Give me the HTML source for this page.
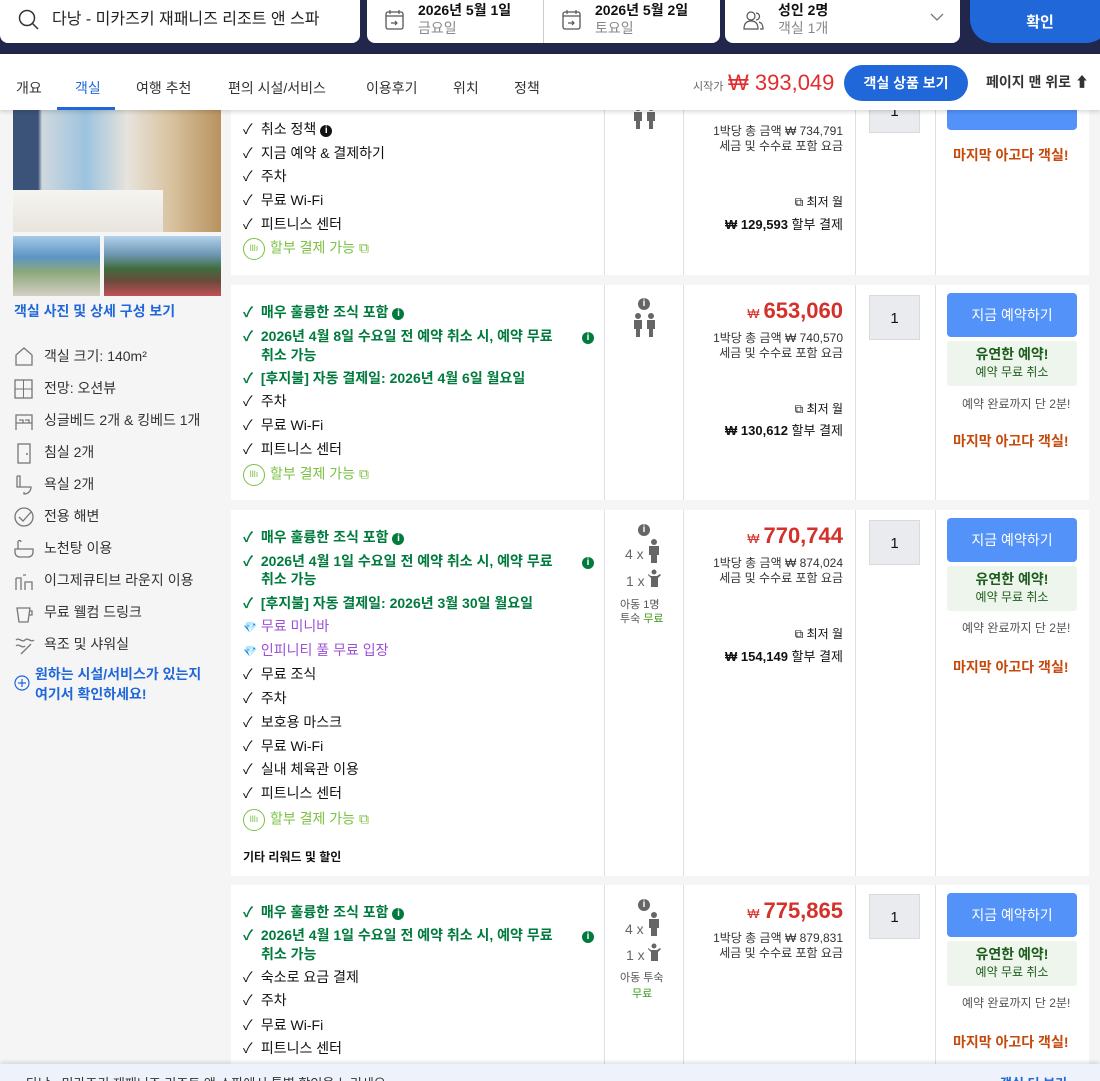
<!DOCTYPE html>
<html><head><meta charset="utf-8"><style>
*{margin:0;padding:0;box-sizing:border-box}
body{width:1100px;height:1081px;overflow:hidden;background:#f5f5f5;font-family:"Liberation Sans","Noto Sans CJK KR",sans-serif;font-size:14px;color:#111;position:relative}
.a{position:absolute;white-space:nowrap;line-height:18px}
.card{position:absolute;left:231px;width:858px;background:#fff}
.vl{position:absolute;top:0;bottom:0;width:1px;background:#e0e0e0}
.g{color:#007a3d;font-weight:bold}
.p{color:#9b4fd6}
.inst{color:#7ac142}
.ck{display:inline-block;width:14px}
.r{text-align:right}
.price{color:#d4312b;font-size:22px;font-weight:bold;line-height:26px}
.price small{font-size:13px;font-weight:normal;margin-right:4px}
.sm{font-size:12px;line-height:15px;color:#333}
.qty{position:absolute;width:51px;height:45px;background:#e9ebee;border:1px solid #d8dadd;text-align:center;line-height:45px;font-size:15px}
.btn{position:absolute;width:130px;height:44px;background:#5392f9;color:#fff;border-radius:4px;text-align:center;line-height:44px;font-size:14px}
.gb{position:absolute;width:130px;height:45px;background:#eef5ec;border-radius:3px;text-align:center;color:#1d5d1d;font-size:14px;font-weight:bold;line-height:20px;padding-top:3px}
.gb div{font-weight:normal;font-size:12px;line-height:17px}
.last{color:#c4490b;font-weight:bold;font-size:14px}
.info{display:inline-block;width:12px;height:12px;border-radius:50%;background:#007a3d;color:#fff;font-size:10px;line-height:12px;text-align:center;font-weight:bold;vertical-align:1px;margin-left:4px}
.ib{background:#111}
.ig{background:#666}
.circ{display:inline-block;width:22px;height:22px;border:1.5px solid #7ac142;border-radius:50%;vertical-align:middle;margin-right:5px;font-size:9px;text-align:center;line-height:19px;color:#7ac142}
.lft{left:44px;color:#333}
</style></head><body>

<!-- header -->
<div style="position:absolute;left:0;top:0;width:1100px;height:54px;background:#20274a"></div>
<div style="position:absolute;left:0;top:-6px;width:360px;height:49px;background:#fff;border-radius:0 0 8px 8px"></div>
<svg class="a" style="left:17px;top:8px" width="24" height="24"><circle cx="10" cy="10" r="7.5" fill="none" stroke="#333" stroke-width="1.5"/><path d="M15.5 15.5L21 21" stroke="#333" stroke-width="1.5"/></svg>
<div class="a" style="left:52px;top:10px;font-size:16px;line-height:20px;color:#222">다낭 - 미카즈키 재패니즈 리조트 앤 스파</div>
<div style="position:absolute;left:367px;top:-6px;width:353px;height:49px;background:#fff;border-radius:0 0 8px 8px"></div>
<div style="position:absolute;left:543px;top:0;width:1px;height:43px;background:#ccc"></div>
<svg class="a" style="left:384px;top:8px" width="22" height="24"><rect x="2" y="4" width="17" height="17" rx="2" fill="none" stroke="#555" stroke-width="1.3"/><path d="M2 8h17M6 2v4M15 2v4M7 15h6M11 13l2 2-2 2" stroke="#555" stroke-width="1.2" fill="none"/></svg>
<div class="a" style="left:418px;top:1px;font-weight:bold">2026년 5월 1일</div>
<div class="a" style="left:418px;top:19px;color:#888">금요일</div>
<svg class="a" style="left:561px;top:8px" width="22" height="24"><rect x="2" y="4" width="17" height="17" rx="2" fill="none" stroke="#555" stroke-width="1.3"/><path d="M2 8h17M6 2v4M15 2v4M7 15h6M11 13l2 2-2 2" stroke="#555" stroke-width="1.2" fill="none"/></svg>
<div class="a" style="left:595px;top:1px;font-weight:bold">2026년 5월 2일</div>
<div class="a" style="left:595px;top:19px;color:#888">토요일</div>
<div style="position:absolute;left:725px;top:-6px;width:235px;height:49px;background:#fff;border-radius:0 0 8px 8px"></div>
<svg class="a" style="left:742px;top:9px" width="24" height="24"><circle cx="9" cy="7" r="4" fill="none" stroke="#555" stroke-width="1.2"/><path d="M2 20c0-6 3-8 7-8s7 2 7 8zM14 4a3.5 3.5 0 110 7M17 13c3 1 4 3 4 7h-3" fill="none" stroke="#555" stroke-width="1.2"/></svg>
<div class="a" style="left:778px;top:1px;font-weight:bold">성인 2명</div>
<div class="a" style="left:778px;top:19px;color:#888">객실 1개</div>
<svg class="a" style="left:930px;top:12px" width="14" height="10"><path d="M1 2l6 6 6-6" fill="none" stroke="#777" stroke-width="1.3"/></svg>
<div style="position:absolute;left:970px;top:-6px;width:140px;height:49px;background:#2067da;border-radius:0 0 24px 24px;color:#fff;font-weight:bold;font-size:15px;text-align:center;line-height:49px;padding-top:4px">확인</div>

<!-- nav -->
<div style="position:absolute;left:0;top:54px;width:1100px;height:56px;background:#fff;box-shadow:0 2px 4px rgba(0,0,0,.15);z-index:5">
<div class="a" style="left:16px;top:25px;color:#333">개요</div>
<div class="a" style="left:75px;top:25px;color:#2067da">객실</div>
<div style="position:absolute;left:57px;top:53px;width:58px;height:3px;background:#2067da"></div>
<div class="a" style="left:136px;top:25px;color:#333">여행 추천</div>
<div class="a" style="left:228px;top:25px;color:#333">편의 시설/서비스</div>
<div class="a" style="left:366px;top:25px;color:#333">이용후기</div>
<div class="a" style="left:453px;top:25px;color:#333">위치</div>
<div class="a" style="left:514px;top:25px;color:#333">정책</div>
<div class="a" style="left:693px;top:24px;font-size:11px;color:#666">시작가</div>
<div class="a" style="left:728px;top:16px;font-size:22px;line-height:26px;color:#e12d2d">₩ 393,049</div>
<div style="position:absolute;left:844px;top:11px;width:124px;height:36px;background:#2067da;border-radius:18px;color:#fff;font-weight:bold;text-align:center;line-height:36px">객실 상품 보기</div>
<div class="a" style="left:986px;top:19px;color:#333;font-weight:bold">페이지 맨 위로 <span style="font-size:14px">⬆</span></div>
</div>

<!-- left panel -->
<div style="position:absolute;left:13px;top:100px;width:208px;height:132px;background:linear-gradient(90deg,#3b5378 0,#3b5378 12%,#cfd8de 14%,#9cc3df 35%,#e7e3dc 55%,#d9c4a2 75%,#b8925d 100%)"></div>
<div style="position:absolute;left:13px;top:190px;width:150px;height:42px;background:linear-gradient(#f6f4f0,#e8e4de)"></div>
<div style="position:absolute;left:13px;top:236px;width:87px;height:60px;background:linear-gradient(#a6c9e6 0,#5c95c4 35%,#8da97a 60%,#d4cfc5 100%)"></div>
<div style="position:absolute;left:104px;top:236px;width:117px;height:60px;background:linear-gradient(#b4d2ea 0,#6f98b6 30%,#3f6b3c 55%,#6b4a3c 75%,#c05058 100%)"></div>
<div class="a" style="left:14px;top:302px;color:#2067da;font-weight:bold">객실 사진 및 상세 구성 보기</div>

<svg class="a" style="left:13px;top:346px" width="22" height="22"><path d="M3 9L11 2l8 7v10H3z" fill="none" stroke="#777" stroke-width="1.3"/></svg>
<div class="a lft" style="top:347px">객실 크기: 140m²</div>
<svg class="a" style="left:13px;top:378px" width="22" height="22"><rect x="2" y="2" width="17" height="18" fill="none" stroke="#777" stroke-width="1.3"/><path d="M10.5 2v18M2 11h17" stroke="#777"/></svg>
<div class="a lft" style="top:379px">전망: 오션뷰</div>
<svg class="a" style="left:13px;top:410px" width="22" height="22"><path d="M3 20V5h16v15M3 13h16M6 10h4v3M12 10h4v3" fill="none" stroke="#777" stroke-width="1.3"/></svg>
<div class="a lft" style="top:411px">싱글베드 2개 &amp; 킹베드 1개</div>
<svg class="a" style="left:13px;top:442px" width="22" height="22"><rect x="5" y="2" width="12" height="19" fill="none" stroke="#777" stroke-width="1.3"/><circle cx="14" cy="12" r="1" fill="#777"/></svg>
<div class="a lft" style="top:443px">침실 2개</div>
<svg class="a" style="left:13px;top:474px" width="22" height="22"><path d="M4 2v11h14c0 4-3 7-7 7v-2M4 2h3v11" fill="none" stroke="#777" stroke-width="1.3"/></svg>
<div class="a lft" style="top:475px">욕실 2개</div>
<svg class="a" style="left:13px;top:506px" width="22" height="22"><circle cx="11" cy="11" r="9" fill="none" stroke="#777" stroke-width="1.3"/><path d="M6 11l4 4 8-9" fill="none" stroke="#777" stroke-width="1.3"/></svg>
<div class="a lft" style="top:507px">전용 해변</div>
<svg class="a" style="left:13px;top:538px" width="22" height="22"><path d="M2 11h18v3c0 3-2 5-5 5H7c-3 0-5-2-5-5zM5 11V4c0-2 3-2 3 0" fill="none" stroke="#777" stroke-width="1.3"/></svg>
<div class="a lft" style="top:539px">노천탕 이용</div>
<svg class="a" style="left:13px;top:570px" width="22" height="22"><path d="M3 20V8M3 8h5v12M12 20v-8h7v8M10 5h3" fill="none" stroke="#777" stroke-width="1.3"/></svg>
<div class="a lft" style="top:571px">이그제큐티브 라운지 이용</div>
<svg class="a" style="left:13px;top:602px" width="22" height="22"><path d="M4 6h13l-2 14H6zM17 9h2v4h-3" fill="none" stroke="#777" stroke-width="1.3"/></svg>
<div class="a lft" style="top:603px">무료 웰컴 드링크</div>
<svg class="a" style="left:13px;top:634px" width="22" height="22"><path d="M3 6c3-3 6 3 9 0s6 3 9 0M3 12c3-3 6 3 9 0M8 20l10-10" fill="none" stroke="#777" stroke-width="1.3"/></svg>
<div class="a lft" style="top:635px">욕조 및 샤워실</div>
<svg class="a" style="left:14px;top:675px" width="16" height="16"><circle cx="8" cy="8" r="7" fill="none" stroke="#2067da" stroke-width="1.2"/><path d="M8 4v8M4 8h8" stroke="#2067da" stroke-width="1.2"/></svg>
<div class="a" style="left:35px;top:664px;color:#2067da;font-weight:bold;line-height:20px">원하는 시설/서비스가 있는지<br>여기서 확인하세요!</div>

<!-- card 1 -->
<div class="card" style="top:60px;height:215px">
<div class="vl" style="left:373px"></div><div class="vl" style="left:452px"></div><div class="vl" style="left:624px"></div><div class="vl" style="left:704px"></div>
</div>
<svg class="a" style="left:632px;top:104px" width="26" height="26"><circle cx="6" cy="4" r="3" fill="#666"/><circle cx="19" cy="4" r="3" fill="#666"/><path d="M2 8h8v9H8v8H4v-8H2zM15 8h8v9h-2v8h-4v-8h-2z" fill="#666"/></svg>
<div class="a" style="left:243px;top:120px"><span class="ck">✓</span> 취소 정책<span class="info ib">i</span></div>
<div class="a" style="left:243px;top:144px"><span class="ck">✓</span> 지금 예약 &amp; 결제하기</div>
<div class="a" style="left:243px;top:167px"><span class="ck">✓</span> 주차</div>
<div class="a" style="left:243px;top:191px"><span class="ck">✓</span> 무료 Wi-Fi</div>
<div class="a" style="left:243px;top:215px"><span class="ck">✓</span> 피트니스 센터</div>
<div class="a inst" style="left:243px;top:238px"><span class="circ">lllı</span>할부 결제 가능 ⧉</div>
<div class="a r sm" style="right:257px;top:124px">1박당 총 금액 ₩ 734,791</div>
<div class="a r sm" style="right:257px;top:139px">세금 및 수수료 포함 요금</div>
<div class="a r sm" style="right:257px;top:195px;color:#111">⧉ 최저 월</div>
<div class="a r" style="right:257px;top:216px;font-size:13px"><b>₩ 129,593</b> 할부 결제</div>
<div class="qty" style="left:869px;top:88px">1</div>
<div class="btn" style="left:947px;top:86px"></div>
<div class="a last" style="left:953px;top:146px">마지막 아고다 객실!</div>

<!-- card 2 -->
<div class="card" style="top:285px;height:215px">
<div class="vl" style="left:373px"></div><div class="vl" style="left:452px"></div><div class="vl" style="left:624px"></div><div class="vl" style="left:704px"></div>
</div>
<div class="a" style="left:638px;top:293px"><span class="info ig" style="margin:0">i</span></div>
<svg class="a" style="left:632px;top:312px" width="26" height="26"><circle cx="6" cy="4" r="3" fill="#666"/><circle cx="19" cy="4" r="3" fill="#666"/><path d="M2 8h8v9H8v8H4v-8H2zM15 8h8v9h-2v8h-4v-8h-2z" fill="#666"/></svg>
<div class="a g" style="left:243px;top:303px"><span class="ck">✓</span> 매우 훌륭한 조식 포함<span class="info">i</span></div>
<div class="a g" style="left:243px;top:327px"><span class="ck">✓</span> 2026년 4월 8일 수요일 전 예약 취소 시, 예약 무료</div>
<div class="a" style="left:578px;top:327px"><span class="info">i</span></div>
<div class="a g" style="left:261px;top:346px">취소 가능</div>
<div class="a g" style="left:243px;top:369px"><span class="ck">✓</span> [후지불] 자동 결제일: 2026년 4월 6일 월요일</div>
<div class="a" style="left:243px;top:392px"><span class="ck">✓</span> 주차</div>
<div class="a" style="left:243px;top:416px"><span class="ck">✓</span> 무료 Wi-Fi</div>
<div class="a" style="left:243px;top:440px"><span class="ck">✓</span> 피트니스 센터</div>
<div class="a inst" style="left:243px;top:464px"><span class="circ">lllı</span>할부 결제 가능 ⧉</div>
<div class="a r price" style="right:257px;top:298px"><small>₩</small>653,060</div>
<div class="a r sm" style="right:257px;top:331px">1박당 총 금액 ₩ 740,570</div>
<div class="a r sm" style="right:257px;top:346px">세금 및 수수료 포함 요금</div>
<div class="a r sm" style="right:257px;top:402px;color:#111">⧉ 최저 월</div>
<div class="a r" style="right:257px;top:422px;font-size:13px"><b>₩ 130,612</b> 할부 결제</div>
<div class="qty" style="left:869px;top:295px">1</div>
<div class="btn" style="left:947px;top:293px">지금 예약하기</div>
<div class="gb" style="left:947px;top:341px">유연한 예약!<div>예약 무료 취소</div></div>
<div class="a sm" style="left:962px;top:397px;color:#555">예약 완료까지 단 2분!</div>
<div class="a last" style="left:953px;top:432px">마지막 아고다 객실!</div>

<!-- card 3 -->
<div class="card" style="top:510px;height:366px">
<div class="vl" style="left:373px"></div><div class="vl" style="left:452px"></div><div class="vl" style="left:624px"></div><div class="vl" style="left:704px"></div>
</div>
<div class="a" style="left:638px;top:519px"><span class="info ig" style="margin:0">i</span></div>
<div class="a" style="left:625px;top:545px;color:#666">4 x</div>
<svg class="a" style="left:647px;top:538px" width="14" height="26"><circle cx="7" cy="4" r="3" fill="#666"/><path d="M2 8h10v9h-2v8H4v-8H2z" fill="#666"/></svg>
<div class="a" style="left:626px;top:572px;color:#666">1 x</div>
<svg class="a" style="left:647px;top:569px" width="14" height="18"><circle cx="7" cy="3" r="2.5" fill="#666"/><path d="M1 5l3 2h6l3-2 1 1-3 3v9H4V9L1 6z" fill="#666"/></svg>
<div class="a sm" style="left:620px;top:598px;font-size:11px;color:#555">아동 1명</div>
<div class="a sm" style="left:620px;top:612px;font-size:11px;color:#555">투숙 <span style="color:#3a9a1a">무료</span></div>
<div class="a g" style="left:243px;top:528px"><span class="ck">✓</span> 매우 훌륭한 조식 포함<span class="info">i</span></div>
<div class="a g" style="left:243px;top:552px"><span class="ck">✓</span> 2026년 4월 1일 수요일 전 예약 취소 시, 예약 무료</div>
<div class="a" style="left:578px;top:552px"><span class="info">i</span></div>
<div class="a g" style="left:261px;top:570px">취소 가능</div>
<div class="a g" style="left:243px;top:594px"><span class="ck">✓</span> [후지불] 자동 결제일: 2026년 3월 30일 월요일</div>
<div class="a p" style="left:243px;top:617px"><span class="ck" style="font-size:11px">💎</span> 무료 미니바</div>
<div class="a p" style="left:243px;top:641px"><span class="ck" style="font-size:11px">💎</span> 인피니티 풀 무료 입장</div>
<div class="a" style="left:243px;top:665px"><span class="ck">✓</span> 무료 조식</div>
<div class="a" style="left:243px;top:689px"><span class="ck">✓</span> 주차</div>
<div class="a" style="left:243px;top:713px"><span class="ck">✓</span> 보호용 마스크</div>
<div class="a" style="left:243px;top:737px"><span class="ck">✓</span> 무료 Wi-Fi</div>
<div class="a" style="left:243px;top:760px"><span class="ck">✓</span> 실내 체육관 이용</div>
<div class="a" style="left:243px;top:784px"><span class="ck">✓</span> 피트니스 센터</div>
<div class="a inst" style="left:243px;top:809px"><span class="circ">lllı</span>할부 결제 가능 ⧉</div>
<div class="a" style="left:243px;top:848px;font-size:12px;font-weight:bold">기타 리워드 및 할인</div>
<div class="a r price" style="right:257px;top:523px"><small>₩</small>770,744</div>
<div class="a r sm" style="right:257px;top:556px">1박당 총 금액 ₩ 874,024</div>
<div class="a r sm" style="right:257px;top:571px">세금 및 수수료 포함 요금</div>
<div class="a r sm" style="right:257px;top:627px;color:#111">⧉ 최저 월</div>
<div class="a r" style="right:257px;top:648px;font-size:13px"><b>₩ 154,149</b> 할부 결제</div>
<div class="qty" style="left:869px;top:520px">1</div>
<div class="btn" style="left:947px;top:518px">지금 예약하기</div>
<div class="gb" style="left:947px;top:566px">유연한 예약!<div>예약 무료 취소</div></div>
<div class="a sm" style="left:962px;top:621px;color:#555">예약 완료까지 단 2분!</div>
<div class="a last" style="left:953px;top:658px">마지막 아고다 객실!</div>

<!-- card 4 -->
<div class="card" style="top:885px;height:196px">
<div class="vl" style="left:373px"></div><div class="vl" style="left:452px"></div><div class="vl" style="left:624px"></div><div class="vl" style="left:704px"></div>
</div>
<div class="a" style="left:638px;top:894px"><span class="info ig" style="margin:0">i</span></div>
<div class="a" style="left:625px;top:920px;color:#666">4 x</div>
<svg class="a" style="left:647px;top:909px" width="14" height="28"><circle cx="7" cy="6" r="3" fill="#666"/><path d="M2 10h10v9h-2v8H4v-8H2z" fill="#666"/></svg>
<div class="a" style="left:626px;top:946px;color:#666">1 x</div>
<svg class="a" style="left:647px;top:943px" width="14" height="18"><circle cx="7" cy="3" r="2.5" fill="#666"/><path d="M1 5l3 2h6l3-2 1 1-3 3v9H4V9L1 6z" fill="#666"/></svg>
<div class="a sm" style="left:620px;top:971px;font-size:11px;color:#555">아동 투숙</div>
<div class="a sm" style="left:632px;top:987px;font-size:11px;color:#3a9a1a">무료</div>
<div class="a g" style="left:243px;top:903px"><span class="ck">✓</span> 매우 훌륭한 조식 포함<span class="info">i</span></div>
<div class="a g" style="left:243px;top:926px"><span class="ck">✓</span> 2026년 4월 1일 수요일 전 예약 취소 시, 예약 무료</div>
<div class="a" style="left:578px;top:926px"><span class="info">i</span></div>
<div class="a g" style="left:261px;top:945px">취소 가능</div>
<div class="a" style="left:243px;top:968px"><span class="ck">✓</span> 숙소로 요금 결제</div>
<div class="a" style="left:243px;top:991px"><span class="ck">✓</span> 주차</div>
<div class="a" style="left:243px;top:1016px"><span class="ck">✓</span> 무료 Wi-Fi</div>
<div class="a" style="left:243px;top:1039px"><span class="ck">✓</span> 피트니스 센터</div>
<div class="a r price" style="right:257px;top:898px"><small>₩</small>775,865</div>
<div class="a r sm" style="right:257px;top:931px">1박당 총 금액 ₩ 879,831</div>
<div class="a r sm" style="right:257px;top:946px">세금 및 수수료 포함 요금</div>
<div class="qty" style="left:869px;top:894px">1</div>
<div class="btn" style="left:947px;top:893px">지금 예약하기</div>
<div class="gb" style="left:947px;top:941px">유연한 예약!<div>예약 무료 취소</div></div>
<div class="a sm" style="left:962px;top:996px;color:#555">예약 완료까지 단 2분!</div>
<div class="a last" style="left:953px;top:1033px">마지막 아고다 객실!</div>

<!-- bottom bar -->
<div style="position:absolute;left:0;top:1064px;width:1100px;height:17px;background:#eef3fb;box-shadow:0 -2px 4px rgba(0,0,0,.12);overflow:hidden">
<div class="a" style="left:26px;top:11px;font-size:13px;color:#333">다낭 - 미카즈키 재패니즈 리조트 앤 스파에서 특별 할인을 누리세요</div>
<div class="a" style="left:1000px;top:11px;font-size:13px;color:#2067da;font-weight:bold">객실 더 보기</div>
</div>
</body></html>
